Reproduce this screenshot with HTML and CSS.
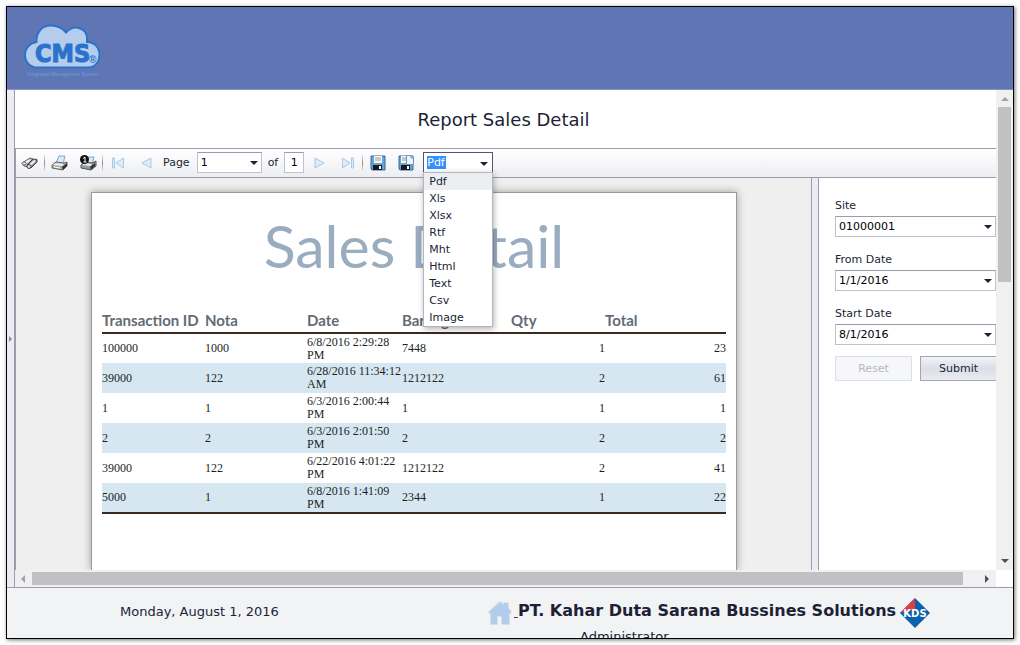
FILE: index.html
```html
<!DOCTYPE html>
<html lang="en">
<head>
<meta charset="utf-8">
<title>Report Sales Detail</title>
<link rel="stylesheet" href="styles.css">
</head>
<body>
<div class="frame">
  <header class="header">
    <svg class="logo" width="82" height="58" viewBox="0 0 82 58" role="img" aria-label="CMS">
      <path d="M15 44.500C7 44.500 2 39 2 32C2 25 7 20 13.500 19C13 9 19 2.500 28 2.500C35 2.500 39.500 5 43 9.500C47 5 52 4 56 5C62 6.500 65 12 64 19C72 19 76.500 25 76.500 32C76.500 39 72 44.500 65 44.500Z" fill="#b4cdec" stroke="#2b72cc" stroke-width="2"/>
      <text class="logo-name" x="12" y="39">CMS</text>
      <text class="logo-mark" x="66" y="40">®</text>
      <text class="logo-line" x="4" y="53">Integrated Management System</text>
    </svg>
  </header>

  <main class="main">
    <div class="collapse"><span class="collapse-arrow"></span></div>
    <div class="scroller">
      <div class="content">
        <h1 class="title">Report Sales Detail</h1>

        <div class="toolbar">
          <button class="tool search" type="button" aria-label="Search">
            <svg width="18" height="16" viewBox="0 0 18 16"><path d="M1 8L9 3L12 4L7 12L3 11Z" fill="#b5b5b5" stroke="#666"/><path d="M6 10L12 4L16 4.500L16 7L10 13Z" fill="#8c8c8c" stroke="#444"/><path d="M4 8L9 5M9 10L14 5.500" stroke="#f4f4f4" stroke-width="2"/><ellipse cx="3" cy="8.500" rx="2" ry="1.500" fill="#eee" stroke="#666"/><ellipse cx="8" cy="11.500" rx="2" ry="2" fill="#ddd" stroke="#444"/></svg>
          </button>
          <span class="divider"></span>
          <button class="tool" type="button" aria-label="Print">
            <svg width="18" height="16" viewBox="0 0 18 16"><path d="M5 8L8 1H14L12 9Z" fill="#d8ebfa" stroke="#7ba7cf"/><path d="M1 10L5 7L13 8L16 7V11L12 15L1 13Z" fill="#aaa" stroke="#666"/><path d="M1.500 10L5 8L13 9L11 11Z" fill="#eee"/><path d="M11 12L16 8V11L12 15Z" fill="#333"/><path d="M3 12L9 13" stroke="#fff"/></svg>
          </button>
          <button class="tool" type="button" aria-label="Print current page">
            <svg width="18" height="16" viewBox="0 0 18 16"><path d="M7 8L10 2H15L13 9Z" fill="#d8ebfa" stroke="#7ba7cf"/><path d="M2 10L6 7L13 8L17 6V11L12 15L2 13Z" fill="#999" stroke="#555"/><path d="M3 10L6 8L13 9L11 11Z" fill="#eee"/><path d="M11 12L16 8V11L12 15Z" fill="#333"/><circle cx="5.500" cy="4.500" r="4.500" fill="#111"/><path d="M4 3.500L6 2V7M4.500 7H7.500" stroke="#fff" fill="none"/></svg>
          </button>
          <span class="divider"></span>
          <button class="tool" type="button" aria-label="First page" disabled>
            <svg width="14" height="12" viewBox="0 0 14 12"><path d="M1.500 1H3.500V11H1.500Z M12.500 1V11L5 6Z" class="nav-shape"/></svg>
          </button>
          <button class="tool" type="button" aria-label="Previous page" disabled>
            <svg width="14" height="12" viewBox="0 0 14 12"><path d="M12 1V11L3 6Z" class="nav-shape"/></svg>
          </button>
          <label for="page">Page</label>
          <span class="select page-select"><select id="page"><option>1</option></select></span>
          <label for="count">of</label>
          <input class="count" id="count" type="text" value="1" readonly>
          <button class="tool" type="button" aria-label="Next page" disabled>
            <svg width="14" height="12" viewBox="0 0 14 12"><path d="M2 1V11L11 6Z" class="nav-shape"/></svg>
          </button>
          <button class="tool" type="button" aria-label="Last page" disabled>
            <svg width="14" height="12" viewBox="0 0 14 12"><path d="M10.500 1H12.500V11H10.500Z M1.500 1V11L9 6Z" class="nav-shape"/></svg>
          </button>
          <span class="divider"></span>
          <button class="tool" type="button" aria-label="Save">
            <svg width="16" height="16" viewBox="0 0 16 16"><path d="M1 1H15V15H2L1 14Z" fill="#65a3d8" stroke="#356c9f"/><path d="M4 1H12V8H4Z" fill="#f8f8f3"/><path d="M5 3H11M5 5H11" stroke="#999"/><path d="M3 10H12V15H3Z" fill="#171b20"/><path d="M9 11H11V14H9Z" fill="#fff"/></svg>
          </button>
          <button class="tool" type="button" aria-label="Save to window">
            <svg width="16" height="16" viewBox="0 0 16 16"><path d="M1 1H15V15H2L1 14Z" fill="#65a3d8" stroke="#356c9f"/><path d="M3 1H9V8H3Z" fill="#f8f8f3"/><path d="M4 3H8M4 5H8" stroke="#999"/><path d="M3 10H12V15H3Z" fill="#171b20"/><path d="M9 11H11V14H9Z" fill="#fff"/><path d="M8.500 .5H13L15.500 3V9.500H8.500Z" fill="#edf6ff" stroke="#6798c4"/><path d="M13 .5V3H15.500" fill="none" stroke="#6798c4"/></svg>
          </button>
          <div class="format">
            <div class="format-box">
              <input class="format-value" type="text" value="Pdf" aria-label="Export format" role="combobox" aria-expanded="true" aria-controls="formats">
            </div>
            <ul class="format-list" id="formats" role="listbox">
              <li class="active" role="option" aria-selected="true">Pdf</li>
              <li role="option">Xls</li>
              <li role="option">Xlsx</li>
              <li role="option">Rtf</li>
              <li role="option">Mht</li>
              <li role="option">Html</li>
              <li role="option">Text</li>
              <li role="option">Csv</li>
              <li role="option">Image</li>
            </ul>
          </div>
        </div>

        <div class="workspace">
          <section class="viewer">
            <article class="sheet">
              <h2 class="sheet-title">Sales Detail</h2>
              <table class="report">
                <colgroup><col class="c-id"><col class="c-nota"><col class="c-date"><col class="c-item"><col class="c-qty"><col class="c-total"></colgroup>
                <thead><tr><th>Transaction ID</th><th>Nota</th><th>Date</th><th>Barang</th><th>Qty</th><th>Total</th></tr></thead>
                <tbody>
                  <tr><td>100000</td><td>1000</td><td>6/8/2016 2:29:28 PM</td><td>7448</td><td class="num">1</td><td class="num">23</td></tr>
                  <tr><td>39000</td><td>122</td><td>6/28/2016 11:34:12 AM</td><td>1212122</td><td class="num">2</td><td class="num">61</td></tr>
                  <tr><td>1</td><td>1</td><td>6/3/2016 2:00:44 PM</td><td>1</td><td class="num">1</td><td class="num">1</td></tr>
                  <tr><td>2</td><td>2</td><td>6/3/2016 2:01:50 PM</td><td>2</td><td class="num">2</td><td class="num">2</td></tr>
                  <tr><td>39000</td><td>122</td><td>6/22/2016 4:01:22 PM</td><td>1212122</td><td class="num">2</td><td class="num">41</td></tr>
                  <tr><td>5000</td><td>1</td><td>6/8/2016 1:41:09 PM</td><td>2344</td><td class="num">1</td><td class="num">22</td></tr>
                </tbody>
              </table>
            </article>
          </section>
          <div class="splitter"></div>
          <form class="params">
            <label for="site">Site</label>
            <span class="select"><select id="site"><option>01000001</option></select></span>
            <label for="from">From Date</label>
            <span class="select"><select id="from"><option>1/1/2016</option></select></span>
            <label for="start">Start Date</label>
            <span class="select"><select id="start"><option>8/1/2016</option></select></span>
            <div class="actions">
              <button class="btn" type="reset" disabled>Reset</button>
              <button class="btn" type="button">Submit</button>
            </div>
          </form>
        </div>
      </div>
      <div class="vbar"><span class="arrow up"></span><span class="vthumb"></span><span class="arrow down"></span></div>
      <div class="hbar"><span class="arrow left"></span><span class="hthumb"></span><span class="arrow right"></span></div>
    </div>
  </main>

  <footer class="footer">
    <div class="today">Monday, August 1, 2016</div>
    <div class="company">
      <div class="company-row">
        <a class="home" href="#"><svg width="26" height="26" viewBox="0 0 26 26" role="img" aria-label="Home"><path d="M2 12L13 2L17 5V3H21V8L24 12L22 14V24H15V16H10V24H4V14Z" fill="#b1cdec" stroke="#dcdfe3" stroke-width="2" stroke-linejoin="round" paint-order="stroke"/></svg><span class="home-gap">&nbsp;</span></a>
        <strong class="company-name">PT. Kahar Duta Sarana Bussines Solutions</strong>
        <svg class="badge" width="30" height="30" viewBox="0 0 30 30" role="img" aria-label="KDS"><path d="M15 0L30 15L15 30L0 15Z" fill="#0862ad"/><path d="M15 0V11L0 15Z" fill="#e23b42"/><text class="badge-text" x="15" y="19">KDS</text></svg>
      </div>
      <div class="user">Administrator</div>
    </div>
  </footer>
</div>
</body>
</html>
```
FILE: styles.css
```css
* { box-sizing: border-box; }
body {
  margin: 0;
  padding: 6px;
  background: #fff;
  color: #201f35;
  font: 11px/14px "DejaVu Sans", Verdana, sans-serif;
}
input, select, button { font: inherit; color: inherit; margin: 0; }
h1, h2, ul { margin: 0; padding: 0; font-weight: normal; }

.frame {
  display: flex;
  flex-direction: column;
  height: calc(100vh - 12px);
  overflow: hidden;
  border: 1px solid #000;
  box-shadow: 1px 1px 4px rgba(0, 0, 0, .55);
}

/* Header */
.header {
  flex: none;
  height: 83px;
  padding: 16px 16px 0;
  background: #6076b4;
  border-bottom: 1px solid #8d95b5;
}
.logo { display: block; }
.logo-name {
  font: bold 25px "Liberation Sans Narrow", "DejaVu Sans Condensed", "DejaVu Sans", sans-serif;
  fill: #2b72cc;
  stroke: #2b72cc;
  stroke-width: 1px;
}
.logo-mark { font: bold 10px "Liberation Sans", sans-serif; fill: #2b72cc; }
.logo-line { font: 5px "Liberation Sans", sans-serif; fill: #5ea0e2; }

/* Main area */
.main { display: flex; flex: 1; min-height: 0; border-bottom: 1px solid #9a9cad; }
.collapse {
  display: flex;
  flex: none;
  align-items: center;
  justify-content: center;
  width: 8px;
  background: #ebedf2;
  border-right: 1px solid #9a9cad;
}
.collapse-arrow { border: 3px solid transparent; border-left-color: #8a8c9c; border-right: 0; }
.scroller {
  display: grid;
  flex: 1;
  grid-template: minmax(0, 1fr) 17px / minmax(0, 1fr) 17px;
  min-width: 0;
}
.content { display: flex; flex-direction: column; min-height: 0; }
.title { flex: none; height: 58px; padding-right: 4px; font-size: 18px; line-height: 60px; text-align: center; }

.vbar, .hbar { display: flex; align-items: center; justify-content: space-between; background: #f0f0f0; }
.vbar { flex-direction: column; padding: 7px 0 7px; }
.hbar { padding: 0 7px 0 6px; }
.vthumb { width: 13px; height: 175px; margin: 6px 0 auto; background: #c1c1c1; }
.hthumb { flex: 1; height: 13px; margin: 0 22px 0 7px; background: #c1c1c1; }
.arrow { border: 4px solid transparent; }
.up { border-bottom-color: #a3a3a3; border-top: 0; }
.down { border-top-color: #505050; border-bottom: 0; }
.left { border-right-color: #a3a3a3; border-left: 0; }
.right { border-left-color: #505050; border-right: 0; }

/* Toolbar */
.toolbar {
  display: flex;
  flex: none;
  align-items: center;
  height: 30px;
  padding: 0 4px 1px;
  background: linear-gradient(#fff, #edeef2);
  border: solid #9a9cad;
  border-width: 1px 0 1px 1px;
}
.tool {
  display: grid;
  flex: none;
  place-items: center;
  width: 28px;
  height: 26px;
  padding: 0;
  background: none;
  border: 0;
}
.search { width: 20px; margin-right: 4px; }
.nav-shape { fill: #ddebf8; stroke: #a9c9ea; stroke-linejoin: round; }
.divider {
  flex: none;
  width: 1px;
  height: 18px;
  margin-right: 1px;
  background: linear-gradient(transparent, #888, transparent);
}
.toolbar label { margin: 0 6px 0 3px; }
.select { position: relative; display: block; }
.select select {
  display: block;
  width: 100%;
  height: 21px;
  padding: 0 3px;
  appearance: none;
  background: #fff;
  border: 1px solid #c0c1cd;
  border-top-color: #9a9cad;
  border-radius: 0;
  color: #000;
}
.select::after, .format-box::after {
  content: "";
  position: absolute;
  top: 9px;
  right: 4px;
  border: 4px solid transparent;
  border-top-color: #201f35;
  border-bottom: 0;
  pointer-events: none;
}
.page-select { width: 65px; margin: 0 3px 0 1px; }
.count {
  width: 20px;
  height: 21px;
  margin-right: 2px;
  padding: 0;
  text-align: center;
  border: 1px solid #c0c1cd;
  border-top-color: #9a9cad;
  color: #000;
}
.format { position: relative; width: 70px; margin-left: 3px; }
.format-box { position: relative; height: 21px; padding: 3px; background: #fff; border: 1px solid #55566e; }
.format-value {
  display: block;
  width: 19px;
  height: 13px;
  padding: 0;
  background: #3390ff;
  border: 0;
  color: #fff;
}
.format-list {
  position: absolute;
  z-index: 2;
  top: 20px;
  left: 0;
  right: 0;
  list-style: none;
  background: #fff;
  border: 1px solid #b4b5c2;
  box-shadow: 1px 2px 6px rgba(0, 0, 0, .3);
}
.format-list li { height: 17px; padding: 0 5px; line-height: 18px; }
.format-list .active { background: #edeef0; }

/* Report viewer */
.workspace { display: flex; flex: 1; min-height: 0; overflow: hidden; }
.viewer {
  flex: 1;
  min-width: 0;
  padding: 14px 74px 0 75px;
  overflow: hidden;
  background: #efefef;
  border-left: 1px solid #9a9cad;
}
.sheet {
  height: 100%;
  padding: 18px 10px 0;
  background: #fff;
  border: solid #999;
  border-width: 1px 1px 0;
  box-shadow: 0 0 8px rgba(0, 0, 0, .35);
}
.sheet-title {
  color: #9aadc0;
  font: 59px/70px Lato, sans-serif;
  text-align: center;
}
.report {
  width: 100%;
  margin-top: 24px;
  table-layout: fixed;
  border-collapse: collapse;
  border-bottom: 2px solid #3b281e;
  color: #201f25;
  font: 12px/13px "Liberation Serif", serif;
}
.report th {
  height: 28px;
  padding: 3px 0 0;
  border-bottom: 2px solid #3b281e;
  color: #646b75;
  font: bold 15px/18px Lato, sans-serif;
  text-align: left;
  white-space: nowrap;
}
.report td { height: 30px; padding: 0; }
.report .num { text-align: right; }
.report tbody tr:nth-child(even) { background: #d7e7f1; }
.c-id { width: 103px; }
.c-nota { width: 102px; }
.c-date { width: 95px; }
.c-item { width: 109px; }
.c-qty { width: 94px; }

/* Parameters */
.splitter { flex: none; width: 8px; background: #ebedf2; border: solid #9a9cad; border-width: 0 1px; }
.params { flex: none; width: 177px; padding: 21px 0 0 16px; overflow: hidden; }
.params label { display: block; margin-bottom: 3px; }
.params .select { margin-bottom: 16px; }
.params select { padding-top: 1px; }
.actions { display: flex; gap: 8px; margin-top: -5px; }
.btn {
  flex: none;
  width: 77px;
  height: 25px;
  padding: 1px 0 0;
  background: linear-gradient(#f2f3f6, #dcdee6 50%, #eaebf0);
  border: 1px solid #a3a5b4;
}
.btn:disabled { background: #f6f7f9; border-color: #dfe0e5; color: #b7b8be; }

/* Footer */
.footer {
  display: flex;
  flex: none;
  height: 50px;
  overflow: hidden;
  background: #f1f3f5;
}
.today { width: 480px; padding: 15px 0 0 113px; font-size: 13px; line-height: 18px; }
.company { padding-top: 10px; }
.company-row { display: flex; align-items: center; height: 30px; }
.home { display: flex; flex: none; width: 31px; color: #4b2f86; }
.home-gap { margin-left: 1px; line-height: 26px; text-decoration: underline; }
.company-name { flex: none; margin-bottom: 5px; font-size: 16px; line-height: 20px; white-space: nowrap; }
.badge { flex: none; margin-left: 4px; }
.badge-text { font: bold 10px "DejaVu Sans", sans-serif; fill: #fff; text-anchor: middle; }
.user { padding-left: 93px; font-size: 13px; line-height: 18px; }
```
